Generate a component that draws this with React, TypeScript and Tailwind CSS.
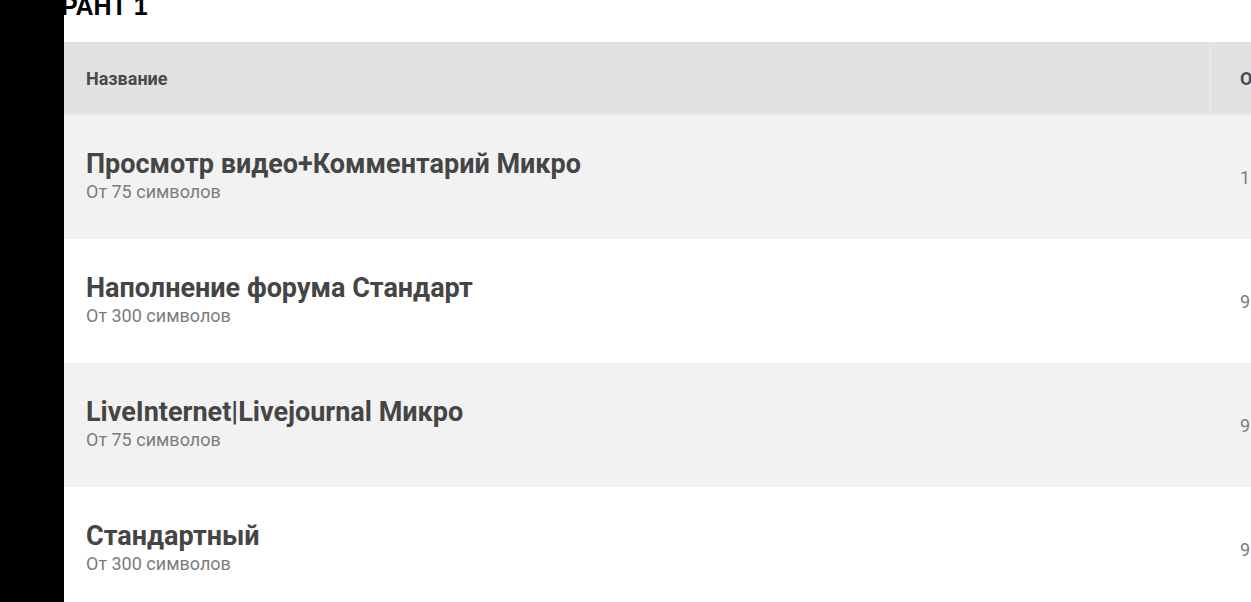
import React from 'react';

type Tariff = {
  name: string;
  note: string;
  price: string;
};

const tariffs: Tariff[] = [
  { name: 'Просмотр видео+Комментарий Микро', note: 'От 75 символов', price: '11' },
  { name: 'Наполнение форума Стандарт', note: 'От 300 символов', price: '9' },
  { name: 'LiveInternet|Livejournal Микро', note: 'От 75 символов', price: '9' },
  { name: 'Стандартный', note: 'От 300 символов', price: '9' },
];

const TariffRow = ({ item, index }: { item: Tariff; index: number }) => {
  const striped = index % 2 === 0;

  return (
    <div className={`flex h-[124px] shrink-0 items-center ${striped ? 'bg-[#f2f2f2]' : 'bg-white'}`}>
      <div className="flex w-[1146px] shrink-0 flex-col pb-[5px] pl-[22px]">
        <span className="text-[27px] leading-[34px] font-bold text-[#454545]">{item.name}</span>
        <span className="text-[18px] leading-[22px] text-[#7c7c7c]">{item.note}</span>
      </div>
      <div className="flex flex-1 pl-[30px] text-[18px] whitespace-nowrap text-[#7c7c7c]">{item.price}</div>
    </div>
  );
};

export default function App() {
  return (
    <div
      className="flex h-[602px] w-[1251px] overflow-hidden bg-white"
      style={{ fontFamily: 'Roboto, "Noto Sans", sans-serif' }}
    >
      {/* боковая полоса */}
      <aside className="h-full w-16 shrink-0 bg-black" />

      <main className="flex min-w-0 flex-1 flex-col overflow-hidden">
        <h1
          className="-mt-[6px] mb-[23px] -ml-[3px] h-[25px] text-[25px] leading-none font-bold whitespace-nowrap text-black"
          style={{ fontFamily: '"Liberation Sans", Arial, sans-serif' }}
        >
          РАНТ 1
        </h1>

        <div className="flex h-[73px] shrink-0 items-center border-b border-[#e9e9e9] bg-[#e2e2e2]">
          <div className="flex w-[1146px] shrink-0 pl-[22px] text-[18px] font-bold text-[#4a4a4a]">Название</div>
          <div className="flex h-full flex-1 items-center border-l border-[#ebebeb] pl-[29px] text-[18px] font-bold whitespace-nowrap text-[#4a4a4a]">
            Описание
          </div>
        </div>

        {tariffs.map((t, i) => (
          <TariffRow key={t.name} item={t} index={i} />
        ))}
      </main>
    </div>
  );
}
